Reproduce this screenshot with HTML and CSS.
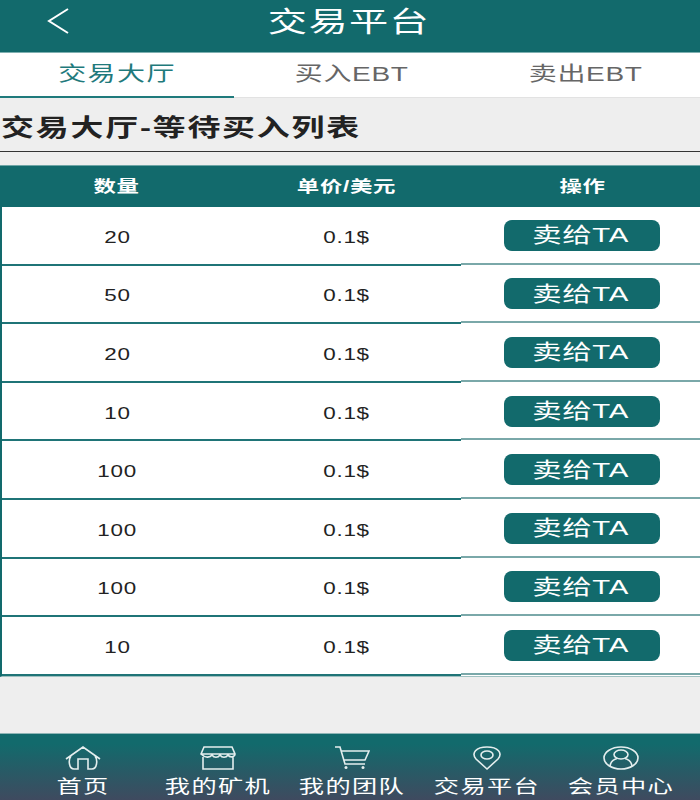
FILE: index.html
```html
<!DOCTYPE html>
<html lang="zh-cn">

<head>
  <meta charset="UTF-8">
  <meta name="viewport" content="width=device-width, initial-scale=1.0">
  <title>交易平台</title>
  <link rel="stylesheet" href="styles.css">
</head>

<body>
  <div class="page">
    <header class="topbar">
      <svg class="back" width="24" height="28" viewBox="0 0 24 28">
        <path d="M21 2 L2 14 L21 26" />
      </svg>
      <h1 class="wide">交易平台</h1>
    </header>

    <nav class="tabs">
      <div class="tab active"><span class="wide">交易大厅</span></div>
      <div class="tab"><span class="wide">买入EBT</span></div>
      <div class="tab"><span class="wide">卖出EBT</span></div>
    </nav>

    <div class="heading"><h2 class="wide">交易大厅-等待买入列表</h2></div>

    <div class="list">
      <div class="list-head">
        <div><span class="wide">数量</span></div>
        <div><span class="wide">单价/美元</span></div>
        <div class="head-op"><span class="wide">操作</span></div>
      </div>
      <div class="row">
        <div class="cell"><span class="wide">20</span></div>
        <div class="cell"><span class="wide">0.1$</span></div>
        <div class="cell op"><button class="sell"><span class="wide">卖给TA</span></button></div>
      </div>
      <div class="row">
        <div class="cell"><span class="wide">50</span></div>
        <div class="cell"><span class="wide">0.1$</span></div>
        <div class="cell op"><button class="sell"><span class="wide">卖给TA</span></button></div>
      </div>
      <div class="row">
        <div class="cell"><span class="wide">20</span></div>
        <div class="cell"><span class="wide">0.1$</span></div>
        <div class="cell op"><button class="sell"><span class="wide">卖给TA</span></button></div>
      </div>
      <div class="row">
        <div class="cell"><span class="wide">10</span></div>
        <div class="cell"><span class="wide">0.1$</span></div>
        <div class="cell op"><button class="sell"><span class="wide">卖给TA</span></button></div>
      </div>
      <div class="row">
        <div class="cell"><span class="wide">100</span></div>
        <div class="cell"><span class="wide">0.1$</span></div>
        <div class="cell op"><button class="sell"><span class="wide">卖给TA</span></button></div>
      </div>
      <div class="row">
        <div class="cell"><span class="wide">100</span></div>
        <div class="cell"><span class="wide">0.1$</span></div>
        <div class="cell op"><button class="sell"><span class="wide">卖给TA</span></button></div>
      </div>
      <div class="row">
        <div class="cell"><span class="wide">100</span></div>
        <div class="cell"><span class="wide">0.1$</span></div>
        <div class="cell op"><button class="sell"><span class="wide">卖给TA</span></button></div>
      </div>
      <div class="row">
        <div class="cell"><span class="wide">10</span></div>
        <div class="cell"><span class="wide">0.1$</span></div>
        <div class="cell op"><button class="sell"><span class="wide">卖给TA</span></button></div>
      </div>
    </div>

    <footer class="bottom">
      <div class="item">
        <svg width="36" height="24" viewBox="0 0 36 24">
          <path d="M1 13 L18 1 L35 13 M6 10 C3 14 4 23 9 23 H13 V13 H23 V23 H27 C32 23 33 14 30 10" />
        </svg>
        <span class="wide">首页</span>
      </div>
      <div class="item">
        <svg width="36" height="24" viewBox="0 0 36 24">
          <path d="M4 1 H32 L35 8 C35 11 30 12 28 9 C26 12 22 12 20 9 C18 12 14 12 12 9 C10 12 5 12 1 8 Z M1 8 H35 M3 11 V23 H33 V11" />
        </svg>
        <span class="wide">我的矿机</span>
      </div>
      <div class="item">
        <svg width="36" height="24" viewBox="0 0 36 24">
          <path d="M1 1 H6 L11 18 H31 M7 5 H35 L31 14 H10" />
          <circle cx="12" cy="21.5" r="1.5" class="dot" />
          <circle cx="29" cy="21.5" r="1.5" class="dot" />
        </svg>
        <span class="wide">我的团队</span>
      </div>
      <div class="item">
        <svg width="36" height="24" viewBox="0 0 36 24">
          <path d="M18 23 L7 13 C2 7 7 1 18 1 C29 1 34 7 29 13 Z" />
          <ellipse cx="18" cy="9" rx="6" ry="4" />
        </svg>
        <span class="wide">交易平台</span>
      </div>
      <div class="item">
        <svg width="36" height="24" viewBox="0 0 36 24">
          <ellipse cx="18" cy="12" rx="17" ry="11" />
          <ellipse cx="18" cy="8.5" rx="7" ry="4.5" />
          <path d="M7 20 C8 14 12 13 14 12.5 M29 20 C28 14 24 13 22 12.5" />
        </svg>
        <span class="wide">会员中心</span>
      </div>
    </footer>
  </div>
</body>

</html>
```

FILE: styles.css
```css
body {
  margin: 0px;
  font-family: "Liberation Sans", "Noto Sans CJK SC", sans-serif;
  background: #eeeeee;
}

.page {
  width: 700px;
  height: 800px;
  display: flex;
  flex-direction: column;
  overflow: hidden;
}

/* the whole screen looks stretched sideways */
.wide {
  display: inline-block;
  margin: 0;
  transform: scaleX(1.4);
  white-space: nowrap;
  letter-spacing: 0.5px;
}

.topbar {
  height: 52px;
  background: #126a6c;
  border-bottom: 1px solid #7fb0b1;
  display: flex;
  align-items: center;
  justify-content: center;
  position: relative;
  color: #fff;
}

.topbar h1 {
  font-size: 28px;
  font-weight: normal;
  line-height: 40px;
  letter-spacing: 1px;
  padding-bottom: 6px;
  margin-right: 2px;
}

.back {
  position: absolute;
  left: 47px;
  top: 7px;
}

.back path {
  fill: none;
  stroke: #fff;
  stroke-width: 2;
}

.tabs {
  height: 44px;
  background: #fff;
  display: grid;
  grid-template-columns: 234px 236px 232px;
  border-bottom: 1px solid #e2e2e2;
}

.tab {
  display: flex;
  align-items: center;
  justify-content: center;
  font-size: 20px;
  color: #666;
  padding-bottom: 6px;
  box-sizing: border-box;
}

.tab.active .wide {
  letter-spacing: 1px;
}

.tab.active {
  color: #1f7a7c;
  border-bottom: 2px solid #1f7a7c;
  margin-bottom: -1px;
  padding-bottom: 4px;
}

.heading {
  height: 54px;
  box-sizing: border-box;
  border-bottom: 1px solid #333;
  display: flex;
  align-items: center;
  padding-left: 1px;
}

.heading h2 {
  font-size: 23.5px;
  font-weight: bold;
  color: #222;
  transform-origin: left center;
  letter-spacing: 1.3px;
  padding-top: 2px;
}

.list {
  margin-top: 13px;
  border-left: 2px solid #126a6c;
  border-bottom: 1px solid #9fc0c0;
}

.list-head,
.row {
  display: grid;
  grid-template-columns: 230px 229px 239px;
}

.list-head {
  margin-left: -2px;
  padding: 0 0 4px 2px;
  height: 42px;
  background: #126a6c;
  color: #fff;
  font-size: 16px;
  font-weight: bold;
  align-items: center;
  text-align: center;
  border-top: 1px solid #6fa5a6;
  box-sizing: border-box;
}

.head-op {
  padding-left: 4px;
}

.row {
  height: 58.6px;
  background: #fff;
}

.cell {
  display: flex;
  align-items: center;
  justify-content: center;
  font-size: 16px;
  color: #222;
  border-bottom: 2px solid #1f7477;
  padding-top: 5px;
  box-sizing: border-box;
}

.cell.op {
  height: 57.6px;
  border-bottom-color: #7aa8a9;
  padding: 1px 0 0 3px;
}

.sell {
  width: 156px;
  height: 31px;
  border: none;
  border-radius: 8px;
  background: #126a6c;
  color: #fff;
  font-family: inherit;
  font-size: 21px;
  padding: 0 3px 0 0;
  line-height: 26px;
}

.bottom {
  margin-top: auto;
  height: 67px;
  box-sizing: border-box;
  border-top: 1px solid #8fb5b6;
  background: linear-gradient(#126a6c, #126a6c 15%, #3f4a5f);
  display: grid;
  grid-template-columns: repeat(5, 134.5px);
  padding: 12px 0 0 16px;
}

.item {
  display: flex;
  flex-direction: column;
  align-items: center;
  color: #fff;
  font-size: 18px;
  line-height: 24px;
  gap: 5px;
}

.item .wide {
  letter-spacing: 1px;
}

.item svg {
  fill: none;
  stroke: #e4eeee;
  stroke-width: 1.6;
}

.item .dot {
  fill: #e4eeee;
  stroke: none;
}
```
